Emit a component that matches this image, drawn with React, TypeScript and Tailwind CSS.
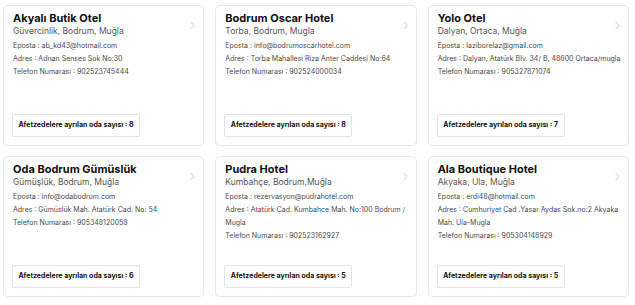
import { ChevronRight } from "lucide-react"

type Hotel = {
  name: string
  place: string
  email: string
  address: string[]
  phone: string
  rooms: number
}

const HOTELS: Hotel[] = [
  {
    name: "Akyalı Butik Otel",
    place: "Güvercinlik, Bodrum, Muğla",
    email: "ab_kd43@hotmail.com",
    address: ["Adnan Senses Sok No:30"],
    phone: "902523745444",
    rooms: 8,
  },
  {
    name: "Bodrum Oscar Hotel",
    place: "Torba, Bodrum, Mugla",
    email: "info@bodrumoscarhotel.com",
    address: ["Torba Mahallesi Riza Anter Caddesi No:64"],
    phone: "902524000034",
    rooms: 8,
  },
  {
    name: "Yolo Otel",
    place: "Dalyan, Ortaca, Muğla",
    email: "laziborelaz@gmail.com",
    address: ["Dalyan, Atatürk Blv. 34/ B, 48600 Ortaca/mugla"],
    phone: "905327871074",
    rooms: 7,
  },
  {
    name: "Oda Bodrum Gümüslük",
    place: "Gümüşlük, Bodrum, Muğla",
    email: "info@odabodrum.com",
    address: ["Gümüslük Mah. Atatürk Cad. No: 54"],
    phone: "905348120058",
    rooms: 6,
  },
  {
    name: "Pudra Hotel",
    place: "Kumbahçe, Bodrum,Muğla",
    email: "rezervasyon@pudrahotel.com",
    address: ["Atatürk Cad. Kumbahce Mah. No:100 Bodrum /", "Mugla"],
    phone: "902523162927",
    rooms: 5,
  },
  {
    name: "Ala Boutique Hotel",
    place: "Akyaka, Ula, Muğla",
    email: "erdi48@hotmail.com",
    address: ["Cumhuriyet Cad .Yasar Aydas Sok.no:2 Akyaka", "Mah. Ula-Mugla"],
    phone: "905304148929",
    rooms: 5,
  },
]

function HotelCard({ hotel }: { hotel: Hotel }) {
  return (
    <div className="flex h-[141px] flex-col rounded-[5px] border border-[#e6e6e6] bg-white pb-[8px] pl-[8px] pr-[4px] pt-[5px]">
      <div className="flex items-start justify-between">
        <div className="pl-[1px]">
          <div className="text-[11px] font-bold leading-[14px] text-[#111]">{hotel.name}</div>
          <div className="text-[8.5px] leading-[13px] text-[#555]">{hotel.place}</div>
        </div>
        <ChevronRight className="mt-[8px] h-[13px] w-[13px] text-[#bbb]" strokeWidth={1.5} />
      </div>
      <div className="mt-[1px] flex flex-col pl-[1px] text-[7px] leading-[13px] text-[#4a4a4a]">
        <div className="whitespace-nowrap">Eposta : {hotel.email}</div>
        {hotel.address.map((line, i) => (
          <div key={i} className="whitespace-nowrap">
            {i === 0 ? `Adres : ${line}` : line}
          </div>
        ))}
        <div className="whitespace-nowrap">Telefon Numarası : {hotel.phone}</div>
      </div>
      <div className="mt-auto">
        <div className="inline-flex h-[23px] w-[128px] items-center justify-center rounded-[2px] border border-[#e3e3e3] text-[7px] font-bold text-[#111]">
          Afetzedelere ayrılan oda sayısı : {hotel.rooms}
        </div>
      </div>
    </div>
  )
}

export default function App() {
  return (
    <div
      className="min-h-[305px] w-[635px] bg-white pl-[3px] pr-[6px] pt-[5px]"
      style={{ fontFamily: "Inter, 'Noto Sans', sans-serif" }}
    >
      <div className="grid grid-cols-3 gap-x-[11px] gap-y-[10px]">
        {HOTELS.map((h) => (
          <HotelCard key={h.name} hotel={h} />
        ))}
      </div>
    </div>
  )
}
